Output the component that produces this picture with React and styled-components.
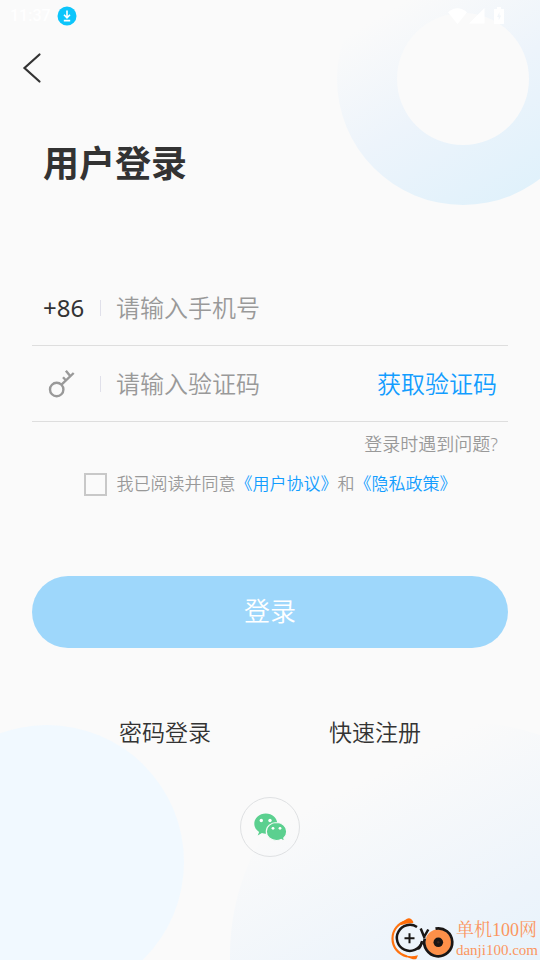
import React from "react";
import styled, { createGlobalStyle } from "styled-components";

const GlobalStyle = createGlobalStyle`
  *, *::before, *::after { box-sizing: border-box; }
  body {
    margin: 0;
    background: #fafafa;
    color: #333;
    font-family: "Noto Sans", "Noto Sans CJK SC", sans-serif;
    font-weight: 350;
  }
  button, input { font: inherit; color: inherit; }
  button { border: 0; padding: 0; background: none; cursor: pointer; }
`;

const Page = styled.div`
  position: relative;
  isolation: isolate;
  display: flex;
  flex-direction: column;
  min-height: 100vh;
  overflow: hidden;
`;

const Ring = styled.div`
  position: absolute;
  z-index: -1;
  top: -47px;
  right: -49px;
  display: grid;
  place-items: center;
  width: 252px;
  height: 252px;
  border-radius: 50%;
  background: linear-gradient(149deg, #fafafa 22%, #edf4fb 53%, #dff1fb 90%);

  &::after {
    content: "";
    width: 132px;
    height: 132px;
    border-radius: 50%;
    background: #fafafa;
  }
`;

const LeftDisc = styled.div`
  position: absolute;
  z-index: -1;
  left: -90px;
  bottom: -39px;
  width: 274px;
  height: 274px;
  border-radius: 50%;
  background: #f1f9ff;
`;

const RightDisc = styled.div`
  position: absolute;
  z-index: -1;
  right: -156px;
  bottom: -228px;
  width: 466px;
  height: 466px;
  border-radius: 50%;
  background: linear-gradient(153deg, #fafafa 18%, #edf4fb 45%, #def1fb 78%);
`;

const StatusBar = styled.header`
  display: flex;
  align-items: center;
  height: 31px;
  padding: 0 34px 0 10px;
  color: #fff;
  font: 500 16px/31px Roboto, sans-serif;
`;

const StatusIcons = styled.div`
  display: flex;
  margin-left: auto;
`;

const Clock = styled.time`
  width: 47px;
`;

const BackButton = styled.button`
  display: grid;
  place-items: center;
  width: 64px;
  height: 73px;
`;

const Main = styled.main`
  padding: 0 32px;
`;

const Title = styled.h1`
  margin: 33px 0 0;
  padding-left: 11px;
  font-size: 36px;
  line-height: 54px;
  font-weight: 700;
`;

const Form = styled.form`
  margin-top: 79px;
`;

const FieldRow = styled.div`
  display: flex;
  align-items: center;
  height: 76px;
  padding: 0 11px;
  border-bottom: 1px solid #dedede;
  font-size: 24px;
`;

const FieldLabel = styled.label`
  display: flex;
  align-items: center;
  width: 57px;
  height: 36px;
  font-weight: 400;
  line-height: 36px;
`;

const Divider = styled.span`
  width: 1px;
  height: 16px;
  margin-right: 15px;
  background: #e0e0ea;
`;

const TextInput = styled.input`
  flex: 1;
  min-width: 0;
  height: 36px;
  padding: 0;
  border: 0;
  outline: 0;
  background: transparent;
  &::placeholder { color: #999; opacity: 1; }
`;

const CodeButton = styled.button`
  color: #129dff;
  line-height: 36px;
`;

const HelpRow = styled.div`
  display: flex;
  justify-content: flex-end;
  padding: 9px 10px 0 0;
`;

const TextLink = styled.a`
  color: ${({ $tone }) => ($tone === "muted" ? "#999" : "#129dff")};
  font-size: ${({ $tone }) => ($tone === "muted" ? "18px" : "17px")};
  line-height: 26px;
  text-decoration: none;
`;

const Agreement = styled.div`
  display: flex;
  align-items: center;
  justify-content: center;
  gap: 10px;
  height: 26px;
  margin-top: 14px;
  color: #999;
  font-size: 17px;
  line-height: 26px;
`;

const Checkbox = styled.input`
  appearance: none;
  width: 23px;
  height: 23px;
  margin: 0;
  border: 2px solid #c8c8c8;
  border-radius: 0;
  &:checked { background: #129dff; }
`;

const SubmitButton = styled.button`
  width: 100%;
  height: 72px;
  margin-top: 79px;
  padding-bottom: 4px;
  border-radius: 36px;
  background: #9ed7fb;
  color: #fff;
  font-size: 26px;
`;

const OtherWays = styled.nav`
  display: grid;
  grid-template-columns: 1fr 1fr;
  width: 420px;
  max-width: 100%;
  margin: 66px auto 0;
`;

const WayLink = styled.a`
  color: #333;
  font-size: 23px;
  line-height: 36px;
  text-align: center;
  text-decoration: none;
`;

const WechatButton = styled.button`
  display: grid;
  place-items: center;
  width: 60px;
  height: 60px;
  margin: 47px auto 0;
  border: 1px solid #dfe1e3;
  border-radius: 50%;
`;

const SiteMark = styled.aside`
  position: absolute;
  right: 2px;
  bottom: 0;
  display: flex;
  gap: 2px;
  height: 43px;
  color: #fb9660;
  font-family: "Liberation Serif", "Noto Serif CJK SC", "Noto Sans CJK SC", serif;
`;

const SiteText = styled.div`
  display: flex;
  flex-direction: column;
  padding-top: 2px;
  white-space: nowrap;
`;

const SiteName = styled.strong`
  font-size: 18px;
  line-height: 22px;
  font-weight: 400;
`;

const SiteDomain = styled.span`
  font-size: 15px;
  line-height: 18px;
`;

function DownloadIcon() {
  return (
    <svg width="20" height="20" viewBox="0 0 20 20" aria-hidden="true">
      <circle cx="10" cy="10" r="9.5" fill="#0cc5fb" />
      <path d="M10 4.500v7M7 8.800l3 3 3-3M6.800 14.600h6.400" fill="none" stroke="#fff" strokeWidth="1.600" />
    </svg>
  );
}

function SignalIcons() {
  return (
    <svg width="58" height="20" viewBox="0 0 58 20" fill="#fff" aria-hidden="true">
      <path d="M0 6.200Q9.500-1.500 19 6.200L9.500 18Z" />
      <path d="M21 17.500 36.500 2v15.500Z" />
      <path fillRule="evenodd" d="M46.500 3H49V1h4v2h2.500q.5 0 .5.7v13.600q0 .7-.7.7h-8.600q-.7 0-.7-.7V3.700q0-.7.5-.7Zm5 3L49 11h1.700v3.500l2.500-5h-1.700Z" />
    </svg>
  );
}

function BackIcon() {
  return (
    <svg width="20" height="32" viewBox="0 0 20 32" aria-hidden="true">
      <path d="M17.500 2.500 2.500 16l15 13.500" fill="none" stroke="#333" strokeWidth="2.200" strokeLinecap="round" />
    </svg>
  );
}

function KeyIcon() {
  return (
    <svg width="38" height="30" viewBox="0 0 38 30" fill="none" stroke="#999" strokeWidth="2.400" aria-hidden="true">
      <circle cx="13.700" cy="20.500" r="6.700" />
      <path d="M18.500 15.700 30.700 4M22.900 1.700l4.300 5.200M20 8.200l3.300 3.500" />
    </svg>
  );
}

function WechatIcon() {
  return (
    <svg width="34" height="30" viewBox="0 0 34 30" aria-hidden="true">
      <path fill="#5bd08f" d="M12.800 1.500C6.500 1.500 1.300 6 1.300 11.700c0 3.500 1.800 6.300 4.800 8.200l-1.400 3.700 4.200-2.500c1.300.4 2.600.6 3.900.6 6.400 0 11.500-4.400 11.500-10S19.200 1.500 12.800 1.500Z" />
      <path fill="#5bd08f" stroke="#fafafa" strokeWidth="1.200" d="M23.500 10.500c-5.600 0-10.200 4-10.200 9s4.600 9 10.200 9c1.700 0 3.200-.4 4.600-1l3.400 2-.7-3.500c2-1.700 2.900-4 2.900-6.500 0-5-4.600-9-10.200-9Z" />
      <g fill="#fff">
        <circle cx="8.300" cy="8.500" r="1.700" />
        <circle cx="17" cy="8.500" r="1.700" />
        <circle cx="20" cy="16.300" r="1.400" />
        <circle cx="27" cy="16.300" r="1.400" />
      </g>
    </svg>
  );
}

function SiteLogo() {
  return (
    <svg width="64" height="43" viewBox="0 0 64 43" fill="none" aria-hidden="true">
      <path d="M17 4.200C8 6 2.500 13 2.500 21.500S8 37 17 39.500" stroke="#ff7310" strokeWidth="2.200" />
      <path d="M11 5.500Q14.500 3.500 17 1.700q4-1.500 6.500 3.500l-1 1.100q-5-.6-12 2ZM12 37.500q8 3 16 .8l-1.500 3.500q-2 1-5 0Q17 41 12 37.500Z" fill="#ff6d08" />
      <circle cx="48.300" cy="25.300" r="13" fill="#fd9049" />
      <path d="M27 10A13 13 0 1 0 32 25.500" stroke="#191615" strokeWidth="2.500" />
      <path d="M19.500 16.300v10M14.500 21.300h10" stroke="#191615" strokeWidth="2" />
      <path d="M45.500 11.600A14 14 0 1 1 34.800 21.500" stroke="#191615" strokeWidth="2.700" />
      <path d="M30.700 11.500 34.600 21M38.300 12.500 34.600 19" stroke="#191615" strokeWidth="2.500" />
      <path d="M32 24q-1 6-4 8" stroke="#191615" strokeWidth="2.400" />
      <circle cx="48.300" cy="25.300" r="4.800" fill="#191615" />
      <circle cx="48.300" cy="25.300" r="1.200" fill="#3a241a" />
    </svg>
  );
}

export default function App() {
  return (
    <>
      <GlobalStyle />
      <Page>
        <Ring />
        <LeftDisc />
        <RightDisc />
        <StatusBar>
          <Clock>11:37</Clock>
          <DownloadIcon />
          <StatusIcons><SignalIcons /></StatusIcons>
        </StatusBar>
        <BackButton type="button" aria-label="返回"><BackIcon /></BackButton>
        <Main>
          <Title>用户登录</Title>
          <Form onSubmit={(event) => event.preventDefault()}>
            <FieldRow>
              <FieldLabel htmlFor="phone">+86</FieldLabel>
              <Divider />
              <TextInput id="phone" type="tel" placeholder="请输入手机号" />
            </FieldRow>
            <FieldRow>
              <FieldLabel htmlFor="code" aria-label="验证码"><KeyIcon /></FieldLabel>
              <Divider />
              <TextInput id="code" type="text" inputMode="numeric" placeholder="请输入验证码" />
              <CodeButton type="button">获取验证码</CodeButton>
            </FieldRow>
            <HelpRow>
              <TextLink href="#help" $tone="muted">登录时遇到问题?</TextLink>
            </HelpRow>
            <Agreement>
              <Checkbox id="agree" type="checkbox" />
              <label htmlFor="agree">
                我已阅读并同意<TextLink href="#terms">《用户协议》</TextLink>和<TextLink href="#privacy">《隐私政策》</TextLink>
              </label>
            </Agreement>
            <SubmitButton type="submit">登录</SubmitButton>
          </Form>
          <OtherWays>
            <WayLink href="#password">密码登录</WayLink>
            <WayLink href="#register">快速注册</WayLink>
          </OtherWays>
          <WechatButton type="button" aria-label="微信登录"><WechatIcon /></WechatButton>
        </Main>
        <SiteMark>
          <SiteLogo />
          <SiteText>
            <SiteName>单机100网</SiteName>
            <SiteDomain>danji100.com</SiteDomain>
          </SiteText>
        </SiteMark>
      </Page>
    </>
  );
}
